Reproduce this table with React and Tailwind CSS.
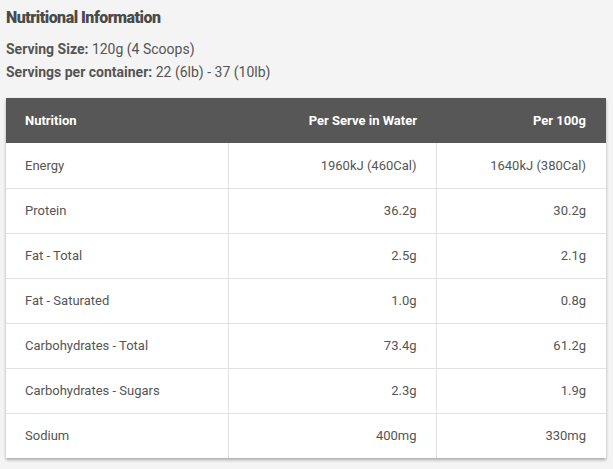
import React from "react";

const rows = [
  ["Energy", "1960kJ (460Cal)", "1640kJ (380Cal)"],
  ["Protein", "36.2g", "30.2g"],
  ["Fat - Total", "2.5g", "2.1g"],
  ["Fat - Saturated", "1.0g", "0.8g"],
  ["Carbohydrates - Total", "73.4g", "61.2g"],
  ["Carbohydrates - Sugars", "2.3g", "1.9g"],
  ["Sodium", "400mg", "330mg"],
];

export default function App() {
  return (
    <div
      className="min-h-[469px] w-[613px] bg-[#f4f4f4] px-[6px] pt-[8px] text-[#555]"
      style={{ fontFamily: "Roboto, 'Liberation Sans', sans-serif" }}
    >
      <h2 className="text-[16px] font-black leading-[20px] tracking-[-0.5px] text-[#4a4a4a]">
        Nutritional Information
      </h2>
      <div className="mt-[10px] text-[14px] leading-[23px]">
        <p>
          <span className="font-bold">Serving Size:</span> 120g (4 Scoops)
        </p>
        <p>
          <span className="font-bold">Servings per container:</span> 22 (6lb) - 37 (10lb)
        </p>
      </div>

      {/* Table */}
      <table className="mt-[14px] w-[600px] border-collapse bg-white text-[13px] shadow-[0_2px_3px_rgba(0,0,0,0.3)]">
        <thead>
          <tr className="h-[45px] bg-[#575757] text-white">
            <th className="w-[222px] pl-[19px] text-left font-bold">Nutrition</th>
            <th className="w-[208px] pr-[19px] text-right font-bold">Per Serve in Water</th>
            <th className="pr-[20px] text-right font-bold">Per 100g</th>
          </tr>
        </thead>
        <tbody>
          {rows.map((r, i) => (
            <tr key={r[0]} className={`h-[45px] ${i > 0 ? "border-t border-[#e2e2e2]" : ""}`}>
              <td className="pl-[19px] text-left">{r[0]}</td>
              <td className="border-l border-[#e2e2e2] pr-[19px] text-right">{r[1]}</td>
              <td className="border-l border-[#e2e2e2] pr-[20px] text-right">{r[2]}</td>
            </tr>
          ))}
        </tbody>
      </table>
    </div>
  );
}
